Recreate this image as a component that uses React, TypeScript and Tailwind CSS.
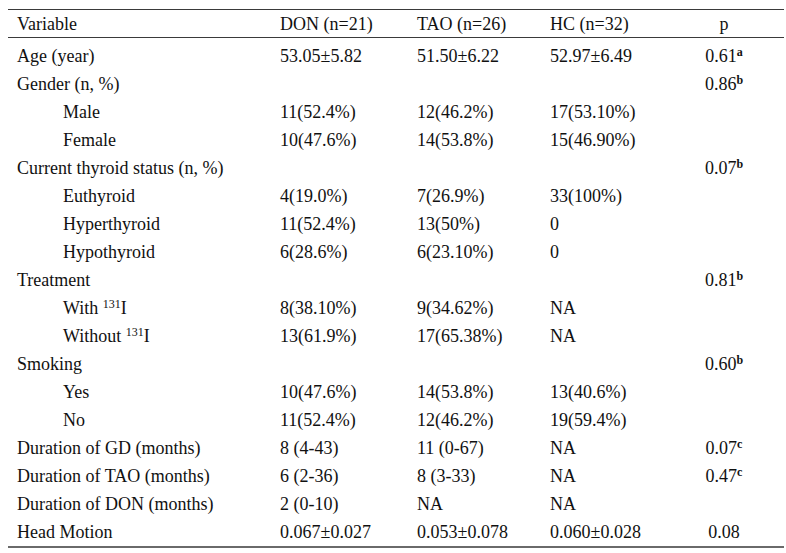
import React from 'react';

type Row = {
  label: React.ReactNode;
  indent?: boolean;
  don?: string;
  tao?: string;
  hc?: string;
  p?: string;
  sup?: string;
};

const rows: Row[] = [
  { label: 'Age (year)', don: '53.05±5.82', tao: '51.50±6.22', hc: '52.97±6.49', p: '0.61', sup: 'a' },
  { label: 'Gender (n, %)', p: '0.86', sup: 'b' },
  { label: 'Male', indent: true, don: '11(52.4%)', tao: '12(46.2%)', hc: '17(53.10%)' },
  { label: 'Female', indent: true, don: '10(47.6%)', tao: '14(53.8%)', hc: '15(46.90%)' },
  { label: 'Current thyroid status (n, %)', p: '0.07', sup: 'b' },
  { label: 'Euthyroid', indent: true, don: '4(19.0%)', tao: '7(26.9%)', hc: '33(100%)' },
  { label: 'Hyperthyroid', indent: true, don: '11(52.4%)', tao: '13(50%)', hc: '0' },
  { label: 'Hypothyroid', indent: true, don: '6(28.6%)', tao: '6(23.10%)', hc: '0' },
  { label: 'Treatment', p: '0.81', sup: 'b' },
  {
    label: (
      <>
        With <sup className="text-[12px] -top-[6px]">131</sup>I
      </>
    ),
    indent: true,
    don: '8(38.10%)',
    tao: '9(34.62%)',
    hc: 'NA',
  },
  {
    label: (
      <>
        Without <sup className="text-[12px] -top-[6px]">131</sup>I
      </>
    ),
    indent: true,
    don: '13(61.9%)',
    tao: '17(65.38%)',
    hc: 'NA',
  },
  { label: 'Smoking', p: '0.60', sup: 'b' },
  { label: 'Yes', indent: true, don: '10(47.6%)', tao: '14(53.8%)', hc: '13(40.6%)' },
  { label: 'No', indent: true, don: '11(52.4%)', tao: '12(46.2%)', hc: '19(59.4%)' },
  { label: 'Duration of GD (months)', don: '8 (4-43)', tao: '11 (0-67)', hc: 'NA', p: '0.07', sup: 'c' },
  { label: 'Duration of TAO (months)', don: '6 (2-36)', tao: '8 (3-33)', hc: 'NA', p: '0.47', sup: 'c' },
  { label: 'Duration of DON (months)', don: '2 (0-10)', tao: 'NA', hc: 'NA' },
  { label: 'Head Motion', don: '0.067±0.027', tao: '0.053±0.078', hc: '0.060±0.028', p: '0.08' },
];

const cols = 'grid grid-cols-[263px_137px_133px_123px_120px]';

export default function App() {
  return (
    <div
      className="w-[786px] h-[553px] bg-white text-[#111] text-[18px] leading-[28px]"
      style={{ fontFamily: '"Liberation Serif", "Times New Roman", serif' }}
    >
      <div className="pt-[9px] pl-[8px]">
        <div className="w-[776px] border-t border-[#3a3a3a]">
          <div className={`${cols} h-[28px] border-b border-[#3a3a3a]`}>
            <div className="pl-[9px]">Variable</div>
            <div className="pl-[9px]">DON (n=21)</div>
            <div className="pl-[9px]">TAO (n=26)</div>
            <div className="pl-[9px]">HC (n=32)</div>
            <div className="text-center">p</div>
          </div>
          <div className="pt-[4px] border-b-2 border-[#6a6a6a]">
            {rows.map((r, i) => (
              <div key={i} className={`${cols} h-[28px]`}>
                <div className={r.indent ? 'pl-[55px]' : 'pl-[9px]'}>{r.label}</div>
                <div className="pl-[9px]">{r.don}</div>
                <div className="pl-[9px]">{r.tao}</div>
                <div className="pl-[9px]">{r.hc}</div>
                <div className="text-center">
                  {r.p}
                  {r.sup && <sup className="text-[12px] font-bold -top-[6px]">{r.sup}</sup>}
                </div>
              </div>
            ))}
          </div>
        </div>
      </div>
    </div>
  );
}
